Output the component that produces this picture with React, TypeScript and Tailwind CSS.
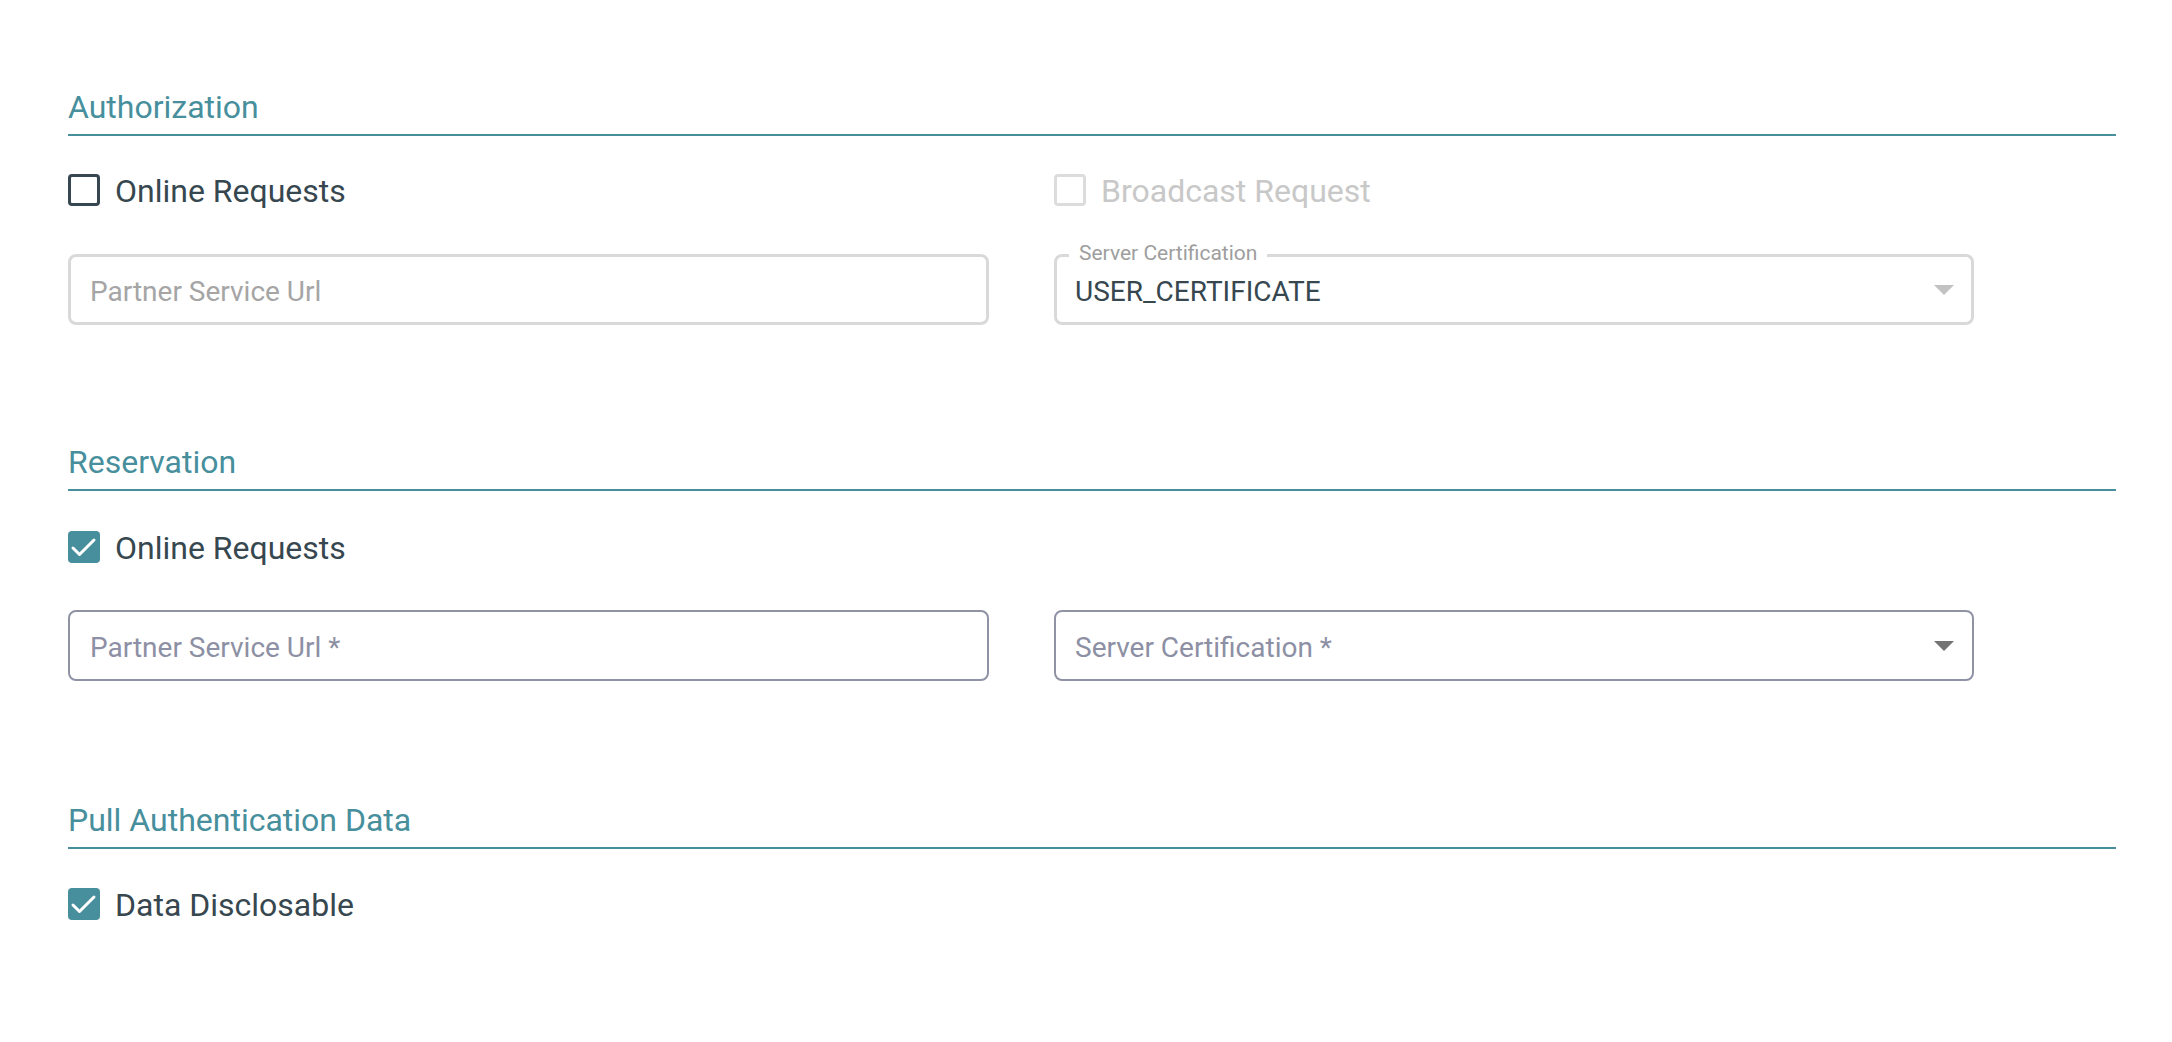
import React from "react";

function CheckIcon() {
  return (
    <svg width="32" height="32" viewBox="0 0 32 32" fill="none">
      <polyline points="5,17 11.5,23.5 26,9" stroke="#ffffff" strokeWidth="3" strokeLinecap="round" strokeLinejoin="round" />
    </svg>
  );
}

function Checkbox({ checked, disabled, label }: { checked?: boolean; disabled?: boolean; label: string }) {
  return (
    <div className="flex items-center h-[40px] gap-[15px]">
      {checked ? (
        <div className="w-[32px] h-[32px] rounded-[4px] bg-[#478f9c] flex items-center justify-center">
          <CheckIcon />
        </div>
      ) : disabled ? (
        <div className="w-[32px] h-[32px] rounded-[4px] border-[3px] border-[#dcdcdc]" />
      ) : (
        <div className="w-[32px] h-[32px] rounded-[4px] border-[3px] border-[#37474f]" />
      )}
      <span className={disabled ? "text-[32px] leading-[40px] pt-[2px] text-[#c8c8c8]" : "text-[32px] leading-[40px] pt-[2px] text-[#37474f]"}>
        {label}
      </span>
    </div>
  );
}

function Arrow({ color }: { color: string }) {
  return (
    <svg width="20" height="10" viewBox="0 0 20 10" className="shrink-0">
      <polygon points="0,0 20,0 10,10" fill={color} />
    </svg>
  );
}

function TextField({ placeholder, disabled }: { placeholder: string; disabled?: boolean }) {
  return (
    <div
      className={
        disabled
          ? "h-[71px] rounded-[8px] border-[3px] border-[#d9d9d9] flex items-center pl-[19px] pr-[19px]"
          : "h-[71px] rounded-[8px] border-2 border-[#9093a5] flex items-center pl-[20px] pr-[20px]"
      }
    >
      <span className={disabled ? "text-[28px] leading-[32px] pt-[4px] text-[#a5a5a5]" : "text-[28px] leading-[32px] pt-[4px] text-[#8d90a4]"}>
        {placeholder}
      </span>
    </div>
  );
}

function SelectFilled({ label, value }: { label: string; value: string }) {
  return (
    <div className="relative h-[71px] rounded-[8px] border-[3px] border-[#d9d9d9] flex items-center pl-[18px] pr-[17px]">
      <span className="absolute left-[12px] top-[-16px] px-[10px] bg-white text-[21px] leading-[24px] text-[#9e9e9e]">
        {label}
      </span>
      <span className="flex-1 text-[28px] leading-[32px] pt-[4px] text-[#37474f]">{value}</span>
      <Arrow color="#c2c2c2" />
    </div>
  );
}

function SelectEmpty({ placeholder }: { placeholder: string }) {
  return (
    <div className="h-[71px] rounded-[8px] border-2 border-[#9093a5] flex items-center pl-[19px] pr-[18px]">
      <span className="flex-1 text-[28px] leading-[32px] pt-[4px] text-[#8d90a4]">{placeholder}</span>
      <Arrow color="#737373" />
    </div>
  );
}

function Heading({ title }: { title: string }) {
  return (
    <div className="border-b-2 border-[#478f9c] pb-[7px]">
      <h2 className="text-[32px] leading-[40px] font-normal text-[#478f9c]">{title}</h2>
    </div>
  );
}

export default function App() {
  return (
    <div
      className="h-[1042px] overflow-hidden w-full bg-white pl-[68px] pr-[56px] pt-[87px]"
      style={{ fontFamily: "Roboto, 'Noto Sans', 'Liberation Sans', sans-serif" }}
    >
      {/* Authorization */}
      <section>
        <Heading title="Authorization" />
        <div className="grid grid-cols-[921px_920px] gap-x-[65px] mt-[34px]">
          <Checkbox label="Online Requests" />
          <Checkbox label="Broadcast Request" disabled />
        </div>
        <div className="grid grid-cols-[921px_920px] gap-x-[65px] mt-[44px]">
          <TextField placeholder="Partner Service Url" disabled />
          <SelectFilled label="Server Certification" value="USER_CERTIFICATE" />
        </div>
      </section>

      {/* Reservation */}
      <section className="mt-[117px]">
        <Heading title="Reservation" />
        <div className="grid grid-cols-[921px_920px] gap-x-[65px] mt-[36px]">
          <Checkbox label="Online Requests" checked />
        </div>
        <div className="grid grid-cols-[921px_920px] gap-x-[65px] mt-[43px]">
          <TextField placeholder="Partner Service Url *" />
          <SelectEmpty placeholder="Server Certification *" />
        </div>
      </section>

      {/* Pull Authentication Data */}
      <section className="mt-[119px]">
        <Heading title="Pull Authentication Data" />
        <div className="mt-[35px]">
          <Checkbox label="Data Disclosable" checked />
        </div>
      </section>
    </div>
  );
}
